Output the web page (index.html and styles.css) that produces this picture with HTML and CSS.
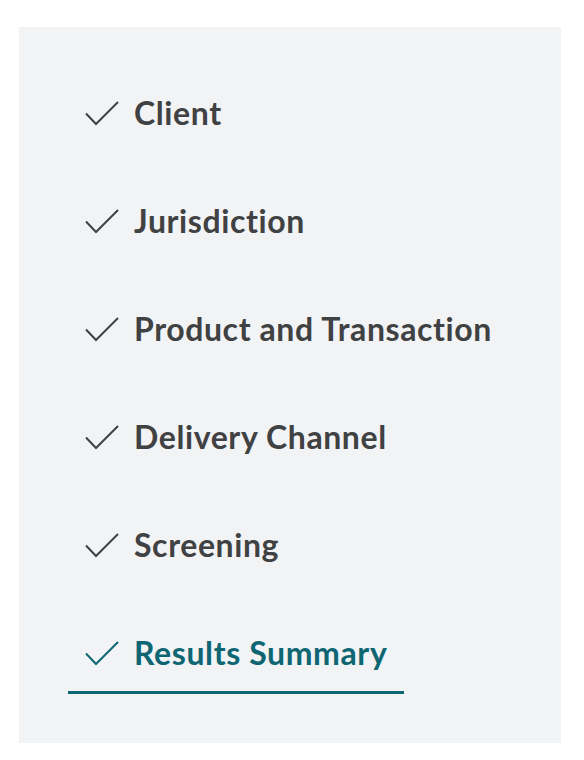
FILE: index.html
```html
<!DOCTYPE html>
<html lang="en">
<head>
  <meta charset="UTF-8">
  <meta name="viewport" content="width=device-width, initial-scale=1.0">
  <title>Steps</title>
  <link rel="stylesheet" href="styles.css">
</head>
<body>
  <nav class="steps">
    <a class="step" href="#">
      <svg class="check" viewBox="0 0 34 25"><polyline points="1,12.5 11,23 33,1"/></svg>
      <span>Client</span>
    </a>
    <a class="step" href="#">
      <svg class="check" viewBox="0 0 34 25"><polyline points="1,12.5 11,23 33,1"/></svg>
      <span>Jurisdiction</span>
    </a>
    <a class="step" href="#">
      <svg class="check" viewBox="0 0 34 25"><polyline points="1,12.5 11,23 33,1"/></svg>
      <span>Product and Transaction</span>
    </a>
    <a class="step" href="#">
      <svg class="check" viewBox="0 0 34 25"><polyline points="1,12.5 11,23 33,1"/></svg>
      <span>Delivery Channel</span>
    </a>
    <a class="step" href="#">
      <svg class="check" viewBox="0 0 34 25"><polyline points="1,12.5 11,23 33,1"/></svg>
      <span>Screening</span>
    </a>
    <a class="step active" href="#">
      <svg class="check" viewBox="0 0 34 25"><polyline points="1,12.5 11,23 33,1"/></svg>
      <span>Results Summary</span>
    </a>
  </nav>
</body>
</html>
```

FILE: styles.css
```css
body {
  margin: 0;
  background-color: white;
  font-family: Lato, "Liberation Sans", sans-serif;
}

/* side panel with the steps */
.steps {
  margin: 27px 23px 17px 19px;
  height: 716px;
  box-sizing: border-box;
  padding: 48px 0 0 49px;
  background-color: #f2f3f5;
  display: flex;
  flex-direction: column;
  align-items: flex-start;
  gap: 29px;
}

.step {
  display: flex;
  align-items: center;
  gap: 15px;
  padding: 20px 17px;
  border-bottom: 3px solid transparent;
  color: #404142;
  text-decoration: none;
  font-size: 32px;
  font-weight: bold;
  letter-spacing: 0.6px;
  font-variant-ligatures: none;
  line-height: 36px;
}

.check {
  width: 34px;
  height: 25px;
  fill: none;
  stroke: currentColor;
  stroke-width: 2;
}

/* current step */
.step.active {
  color: #0e6673;
  border-bottom-color: #0e6673;
}
```
